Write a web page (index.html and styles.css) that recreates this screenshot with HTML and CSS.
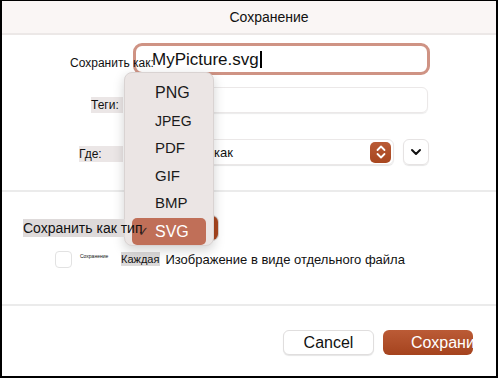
FILE: index.html
```html
<!DOCTYPE html>
<html lang="ru">
<head>
    <meta charset="UTF-8">
    <meta name="viewport" content="width=device-width, initial-scale=1.0">
    <title>Сохранение</title>
    <link rel="stylesheet" href="styles.css">
</head>
<body>
    <div class="dialog">
        <div class="titlebar">Сохранение</div>

        <div class="form">
            <div class="row name-row">
                <div class="label-col"><span class="label name-label">Сохранить как:</span></div>
                <div class="name-input">MyPicture.svg<span class="caret"></span></div>
            </div>

            <div class="row tags-row">
                <div class="label-col"><span class="label tags-label">Теги:</span></div>
                <div class="tags-input"></div>
            </div>

            <div class="row where-row">
                <div class="label-col"><span class="label where-label">Где:</span></div>
                <div class="where-select">
                    <span class="where-text">как</span>
                    <span class="stepper">
                        <svg width="12" height="16" viewBox="0 0 12 16">
                            <path d="M2.5 6 L6 2.5 L9.5 6 M2.5 10 L6 13.5 L9.5 10" fill="none" stroke="#fff" stroke-width="1.8" stroke-linecap="round" stroke-linejoin="round"/>
                        </svg>
                    </span>
                </div>
                <div class="expand-btn">
                    <svg width="12" height="8" viewBox="0 0 12 8">
                        <path d="M2 2 L6 6 L10 2" fill="none" stroke="#111" stroke-width="2" stroke-linecap="round" stroke-linejoin="round"/>
                    </svg>
                </div>
            </div>
        </div>

        <div class="separator"></div>

        <div class="options">
            <div class="row type-row">
                <span class="label type-label">Сохранить как тип</span>
                <span class="type-popup"></span>
            </div>

            <div class="row check-row">
                <span class="checkbox"></span>
                <span class="tiny">Сохранение</span>
                <span class="label each-label">Каждая</span>
                <span class="check-text">Изображение в виде отдельного файла</span>
            </div>
        </div>

        <div class="separator bottom-sep"></div>

        <div class="buttons">
            <button class="btn cancel">Cancel</button>
            <button class="btn save">Сохранить</button>
        </div>

        <!-- format popup menu, open over the form -->
        <div class="menu">
            <div class="item png">PNG</div>
            <div class="item jpeg">JPEG</div>
            <div class="item">PDF</div>
            <div class="item">GIF</div>
            <div class="item">BMP</div>
            <div class="item selected"><span class="check">✓</span>SVG</div>
        </div>
    </div>
</body>
</html>
```

FILE: styles.css
```css
body {
    margin: 0;
    background-color: #000;
    font-family: "Liberation Sans", Arial, sans-serif;
    color: #111;
}
.dialog {
    position: relative;
    margin: 1px 2px 2px 2px;
    height: 375px;
    background-color: #fff;
    overflow: hidden;
}
.titlebar {
    height: 32px;
    line-height: 32px;
    padding-left: 40px;
    text-align: center;
    font-size: 14px;
    background-color: #faf6f5;
    border-bottom: 2px solid #ece8e7;
}
.form {
    padding-top: 8px;
}
.row {
    display: flex;
    align-items: center;
}
.label-col {
    width: 131px;
    flex-shrink: 0;
    white-space: nowrap;
}
.label {
    display: inline-block;
    font-size: 12px;
    white-space: nowrap;
}
.name-row {
    height: 32px;
}
.name-label {
    position: relative;
    z-index: 1;
    margin-left: 68px;
    margin-top: 8px;
}
.name-input {
    box-sizing: border-box;
    width: 297px;
    height: 32px;
    padding-left: 16px;
    line-height: 25px;
    font-size: 17px;
    border: 3px solid #cf9384;
    border-radius: 9px;
    display: flex;
    align-items: center;
}
.caret {
    display: inline-block;
    width: 2px;
    height: 17px;
    background-color: #000;
    margin-left: 1px;
}
.tags-row {
    margin-top: 12px;
    height: 26px;
}
.tags-label {
    margin-left: 89px;
    margin-top: 9px;
    padding: 1px 4px 1px 0;
    background-color: #ebe6e6;
}
.tags-input {
    box-sizing: border-box;
    width: 295px;
    height: 26px;
    border: 1px solid #ebe8e8;
    border-radius: 6px;
    box-shadow: 0 1px 1px rgba(0, 0, 0, 0.08);
}
.where-row {
    margin-top: 26px;
    height: 26px;
}
.where-label {
    margin-left: 77px;
    margin-top: 3px;
    padding: 1px 21px 1px 0;
    background-color: #ebe6e6;
}
.where-select {
    box-sizing: border-box;
    width: 261px;
    height: 26px;
    padding: 0 2px 0 80px;
    display: flex;
    align-items: center;
    justify-content: space-between;
    border: 1px solid #ebe8e8;
    border-radius: 6px;
    box-shadow: 0 1px 1px rgba(0, 0, 0, 0.1);
}
.where-text {
    font-size: 13px;
    background-color: #fff;
}
.stepper {
    width: 21px;
    height: 21px;
    border-radius: 5px;
    background: linear-gradient(#b95b36, #a8461f);
    display: flex;
    align-items: center;
    justify-content: center;
}
.expand-btn {
    box-sizing: border-box;
    width: 26px;
    height: 26px;
    margin-left: 9px;
    border: 1px solid #e6e3e3;
    border-radius: 6px;
    box-shadow: 0 1px 1px rgba(0, 0, 0, 0.1);
    display: flex;
    align-items: center;
    justify-content: center;
}
.separator {
    margin-top: 25px;
    border-top: 2px solid #ebebeb;
}
.type-row {
    margin-top: 24px;
    height: 24px;
}
.type-label {
    position: relative;
    z-index: 3;
    width: 102px;
    margin-left: 21px;
    font-size: 14px;
    line-height: 18px;
    background-color: #dedada;
}
.type-popup {
    width: 68px;
    height: 24px;
    margin-left: 25px;
    border-radius: 6px;
    background-color: #a9461f;
    box-shadow: 0 0 0 1px #d8d4d3;
}
.check-row {
    margin-top: 10px;
    height: 18px;
}
.checkbox {
    box-sizing: border-box;
    width: 17px;
    height: 17px;
    margin-left: 53px;
    border: 1px solid #e2e2e2;
    border-radius: 4px;
}
.tiny {
    align-self: flex-start;
    width: 33px;
    margin: 3px 8px 0 8px;
    font-size: 5px;
    white-space: nowrap;
}
.each-label {
    font-size: 11px;
    line-height: 14px;
    padding-right: 1px;
    background-color: #dcdada;
}
.check-text {
    margin-left: 5px;
    font-size: 13px;
    white-space: nowrap;
}
.bottom-sep {
    margin-top: 36px;
}
.buttons {
    display: flex;
    justify-content: flex-end;
    gap: 9px;
    margin-top: 24px;
    padding-right: 23px;
}
.btn {
    box-sizing: border-box;
    height: 25px;
    border-radius: 6px;
    font-family: "Liberation Sans", Arial, sans-serif;
    font-size: 16px;
    padding: 0;
}
.cancel {
    width: 91px;
    background-color: #fff;
    color: #111;
    border: 1px solid #e0dede;
    box-shadow: 0 1px 1px rgba(0, 0, 0, 0.1);
}
.save {
    width: 90px;
    padding-left: 28px;
    text-align: left;
    white-space: nowrap;
    overflow: hidden;
    color: #fff;
    border: none;
    background: linear-gradient(#bb5b36, #a5431e);
}
.menu {
    position: absolute;
    z-index: 2;
    left: 122px;
    top: 71px;
    box-sizing: border-box;
    width: 90px;
    height: 174px;
    padding: 7px 7px 0 7px;
    display: flex;
    flex-direction: column;
    gap: 1.5px;
    background-color: #ebe5e4;
    border: 1px solid #d9d3d2;
    border-radius: 8px;
    box-shadow: 0 4px 12px rgba(0, 0, 0, 0.18);
}
.item {
    position: relative;
    height: 26px;
    line-height: 26px;
    padding-left: 23px;
    font-size: 15px;
    color: #1a1a1a;
}
.item.png {
    font-size: 16px;
}
.item.jpeg {
    font-size: 14px;
}
.item.selected {
    height: 27px;
    line-height: 27px;
    border-radius: 5px;
    background-color: #c06f58;
    color: #fff;
    font-size: 16px;
}
.check {
    position: absolute;
    left: 6px;
    top: 0;
    font-size: 13px;
    color: #3a2622;
}
```
